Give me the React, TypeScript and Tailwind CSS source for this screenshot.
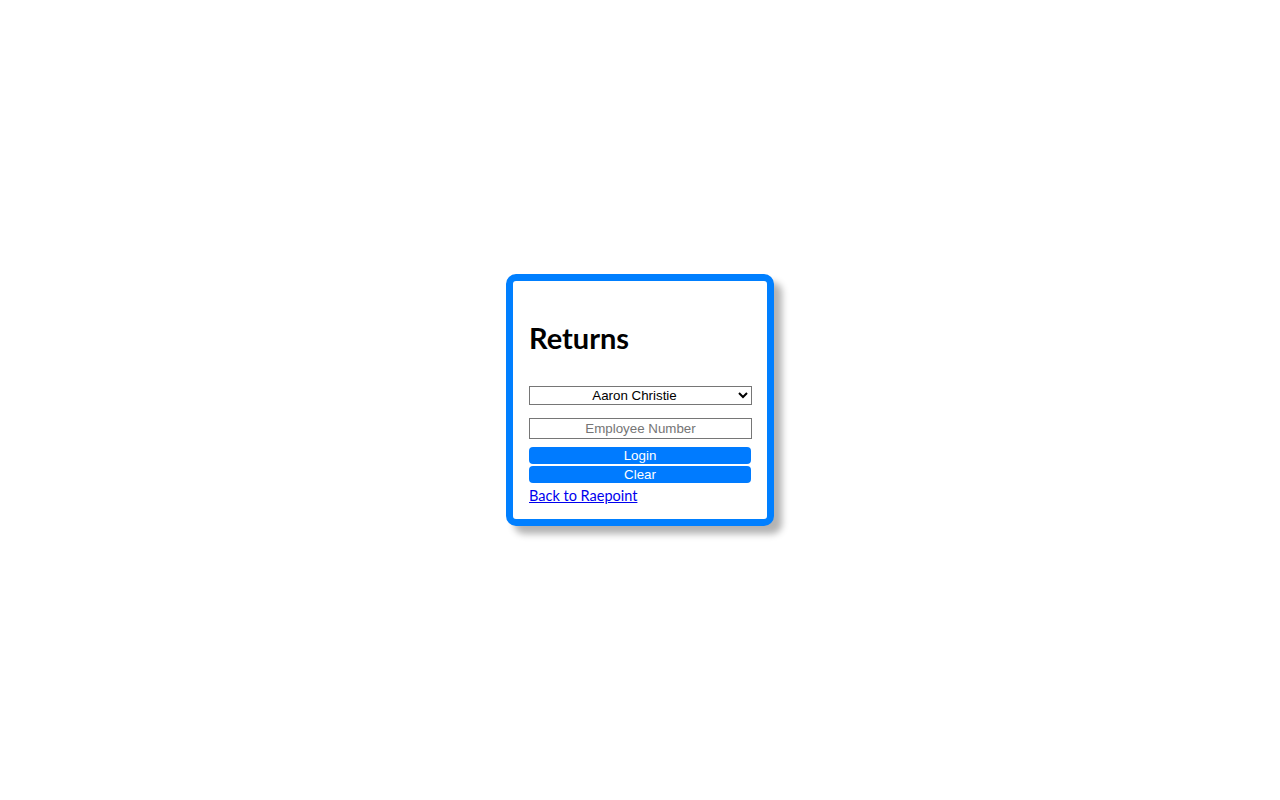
import { useState } from 'react';

const employees = ['Aaron Christie', 'Beth Hollis', 'Carl Mendez', 'Dana Wright'];

const App = () => {
  const [employee, setEmployee] = useState(employees[0]);
  const [number, setNumber] = useState('');

  return (
    <div className="flex min-h-screen items-center justify-center bg-white">
      <div className="w-[268px] h-[252px] rounded-[10px] border-[7px] border-[#007fff] bg-white px-4 pt-[39px] shadow-[8px_8px_7px_rgba(0,0,0,0.3)]">
        <h1 className="font-['Lato','Noto_Sans',sans-serif] text-[29px] font-bold leading-[36px] text-black">
          Returns
        </h1>

        <select
          value={employee}
          onChange={(e) => setEmployee(e.target.value)}
          className="mt-[30px] block h-[19px] w-[223px] border border-[#767676] bg-white font-['Liberation_Sans',Arial,sans-serif] text-[13.33px] leading-none text-black [text-align-last:center]"
        >
          {employees.map((name) => (
            <option key={name} value={name}>
              {name}
            </option>
          ))}
        </select>

        <input
          type="text"
          value={number}
          onChange={(e) => setNumber(e.target.value)}
          placeholder="Employee Number"
          className="mt-[13px] block h-[21px] w-[223px] border border-[#767676] bg-white px-[2px] text-center font-['Liberation_Sans',Arial,sans-serif] text-[13.33px] text-black placeholder:text-[#757575] outline-none"
        />

        <button
          type="button"
          className="mt-2 block h-[17px] w-[222px] rounded-[4px] bg-[#007bff] font-['Liberation_Sans',Arial,sans-serif] text-[13.33px] leading-[17px] text-white"
        >
          Login
        </button>
        <button
          type="button"
          onClick={() => setNumber('')}
          className="mt-[2px] block h-[17px] w-[222px] rounded-[4px] bg-[#007bff] font-['Liberation_Sans',Arial,sans-serif] text-[13.33px] leading-[17px] text-white"
        >
          Clear
        </button>

        <a
          href="#"
          className="inline-block font-['Lato','Noto_Sans',sans-serif] text-[14.5px] leading-[15px] text-[#0000ee] underline"
        >
          Back to Raepoint
        </a>
      </div>
    </div>
  );
};

export default App;
